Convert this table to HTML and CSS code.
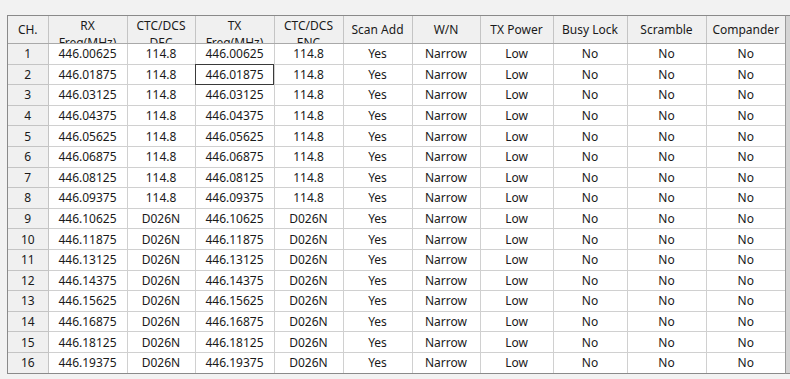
FILE: index.html
```html
<!DOCTYPE html>
<html>
<head>
<meta charset="utf-8">
<link rel="stylesheet" href="styles.css">
</head>
<body>
<div class="page">
  <div class="frame">
    <table class="grid">
      <colgroup>
        <col class="c-ch"><col class="c-rx"><col class="c-dec"><col class="c-tx"><col class="c-enc"><col class="c-scan"><col class="c-wn"><col class="c-pow"><col class="c-busy"><col class="c-scr"><col class="c-comp">
      </colgroup>
      <thead>
        <tr>
          <th><div class="h1">CH.</div></th>
          <th><div class="h2">RX<br>Freq(MHz)</div></th>
          <th><div class="h2">CTC/DCS<br>DEC</div></th>
          <th><div class="h2">TX<br>Freq(MHz)</div></th>
          <th><div class="h2">CTC/DCS<br>ENC</div></th>
          <th><div class="h1">Scan Add</div></th>
          <th><div class="h1">W/N</div></th>
          <th><div class="h1">TX Power</div></th>
          <th><div class="h1">Busy Lock</div></th>
          <th><div class="h1">Scramble</div></th>
          <th><div class="h1">Compander</div></th>
        </tr>
      </thead>
      <tbody>
        <tr><td class="ch">1</td><td>446.00625</td><td>114.8</td><td>446.00625</td><td>114.8</td><td>Yes</td><td>Narrow</td><td>Low</td><td>No</td><td>No</td><td>No</td></tr>
        <tr><td class="ch">2</td><td>446.01875</td><td>114.8</td><td class="sel">446.01875</td><td>114.8</td><td>Yes</td><td>Narrow</td><td>Low</td><td>No</td><td>No</td><td>No</td></tr>
        <tr><td class="ch">3</td><td>446.03125</td><td>114.8</td><td>446.03125</td><td>114.8</td><td>Yes</td><td>Narrow</td><td>Low</td><td>No</td><td>No</td><td>No</td></tr>
        <tr><td class="ch">4</td><td>446.04375</td><td>114.8</td><td>446.04375</td><td>114.8</td><td>Yes</td><td>Narrow</td><td>Low</td><td>No</td><td>No</td><td>No</td></tr>
        <tr><td class="ch">5</td><td>446.05625</td><td>114.8</td><td>446.05625</td><td>114.8</td><td>Yes</td><td>Narrow</td><td>Low</td><td>No</td><td>No</td><td>No</td></tr>
        <tr><td class="ch">6</td><td>446.06875</td><td>114.8</td><td>446.06875</td><td>114.8</td><td>Yes</td><td>Narrow</td><td>Low</td><td>No</td><td>No</td><td>No</td></tr>
        <tr><td class="ch">7</td><td>446.08125</td><td>114.8</td><td>446.08125</td><td>114.8</td><td>Yes</td><td>Narrow</td><td>Low</td><td>No</td><td>No</td><td>No</td></tr>
        <tr><td class="ch">8</td><td>446.09375</td><td>114.8</td><td>446.09375</td><td>114.8</td><td>Yes</td><td>Narrow</td><td>Low</td><td>No</td><td>No</td><td>No</td></tr>
        <tr><td class="ch">9</td><td>446.10625</td><td>D026N</td><td>446.10625</td><td>D026N</td><td>Yes</td><td>Narrow</td><td>Low</td><td>No</td><td>No</td><td>No</td></tr>
        <tr><td class="ch">10</td><td>446.11875</td><td>D026N</td><td>446.11875</td><td>D026N</td><td>Yes</td><td>Narrow</td><td>Low</td><td>No</td><td>No</td><td>No</td></tr>
        <tr><td class="ch">11</td><td>446.13125</td><td>D026N</td><td>446.13125</td><td>D026N</td><td>Yes</td><td>Narrow</td><td>Low</td><td>No</td><td>No</td><td>No</td></tr>
        <tr><td class="ch">12</td><td>446.14375</td><td>D026N</td><td>446.14375</td><td>D026N</td><td>Yes</td><td>Narrow</td><td>Low</td><td>No</td><td>No</td><td>No</td></tr>
        <tr><td class="ch">13</td><td>446.15625</td><td>D026N</td><td>446.15625</td><td>D026N</td><td>Yes</td><td>Narrow</td><td>Low</td><td>No</td><td>No</td><td>No</td></tr>
        <tr><td class="ch">14</td><td>446.16875</td><td>D026N</td><td>446.16875</td><td>D026N</td><td>Yes</td><td>Narrow</td><td>Low</td><td>No</td><td>No</td><td>No</td></tr>
        <tr><td class="ch">15</td><td>446.18125</td><td>D026N</td><td>446.18125</td><td>D026N</td><td>Yes</td><td>Narrow</td><td>Low</td><td>No</td><td>No</td><td>No</td></tr>
        <tr><td class="ch">16</td><td>446.19375</td><td>D026N</td><td>446.19375</td><td>D026N</td><td>Yes</td><td>Narrow</td><td>Low</td><td>No</td><td>No</td><td>No</td></tr>
      </tbody>
    </table>
  </div>
  <div class="strip"></div>
</div>
</body>
</html>
```

FILE: styles.css
```css
html, body {
  margin: 0;
  padding: 0;
}
body {
  background: #f2f2f2;
  font-family: "Noto Sans", "Liberation Sans", sans-serif;
  font-size: 12px;
  color: #1a1a1a;
  width: 790px;
  height: 379px;
  overflow: hidden;
}
.page {
  padding: 15px 0 0 7px;
  display: flex;
  align-items: stretch;
}
.frame {
  border-left: 1px solid #8a8a8a;
  border-top: 1px solid #8a8a8a;
  border-bottom: 1px solid #8a8a8a;
  background: #ffffff;
  width: 777px;
  flex: none;
}
.strip {
  flex: 1;
  background: #d4d4d4;
  border-left: 1px solid #9a9a9a;
  border-top: 1px solid #8a8a8a;
  border-bottom: 1px solid #8a8a8a;
}
.grid {
  table-layout: fixed;
  border-collapse: collapse;
  width: 777px;
  background: #ffffff;
}
.c-ch { width: 40px; }
.c-rx { width: 79px; }
.c-dec { width: 68px; }
.c-tx { width: 79px; }
.c-enc { width: 69px; }
.c-scan { width: 69px; }
.c-wn { width: 68px; }
.c-pow { width: 73px; }
.c-busy { width: 74px; }
.c-scr { width: 79px; }
.c-comp { width: 79px; }

.grid th {
  height: 27px;
  padding: 0;
  background: #f0f0f0;
  border: 1px solid #c4c4c4;
  border-top: none;
  border-bottom: 1px solid #a9a9a9;
  font-weight: normal;
  text-align: center;
  vertical-align: top;
  overflow: hidden;
}
.grid th:first-child { border-left: none; }
.grid th:last-child { border-right: none; }
.h1 {
  height: 27px;
  line-height: 27px;
  white-space: nowrap;
}
.h2 {
  height: 27px;
  line-height: 17px;
  padding-top: 1px;
  box-sizing: border-box;
  overflow: hidden;
  white-space: nowrap;
}
.grid td {
  height: 19.6px;
  padding: 0;
  border: 1px solid #d0d0d0;
  text-align: center;
  white-space: nowrap;
  line-height: 19px;
}
.grid td:first-child { border-left: none; }
.grid td:last-child { border-right: none; }
.grid tr:last-child td { border-bottom: none; }
.grid td.ch {
  background: #f0f0f0;
  border-color: #c4c4c4;
}
.grid td.sel {
  outline: 1px solid #3a3a3a;
  outline-offset: -1px;
}
```
